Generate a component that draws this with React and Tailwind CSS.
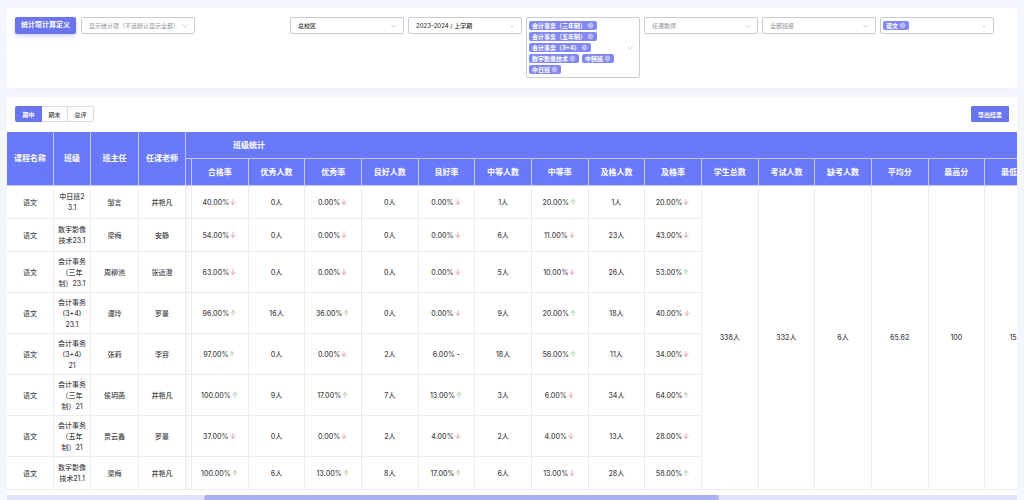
import React from 'react';
import { ArrowDown, ArrowUp, ChevronDown, CircleX } from 'lucide-react';

const classTags = ['会计事务（三年制）', '会计事务（五年制）', '会计事务（3+4）', '数字影像技术', '中韩班', '中日班'];

const statColumns = [
    '合格率', '优秀人数', '优秀率', '良好人数', '良好率', '中等人数', '中等率', '及格人数', '及格率',
    '学生总数', '考试人数', '缺考人数', '平均分', '最高分', '最低分',
];

const totals = ['338人', '332人', '6人', '65.62', '100', '15'];

// Trailing + means up, - means down, = means unchanged
const rows = [
    { name: '中日班2\n3.1', head: '邹言', teacher: '井艳凡', stats: ['40.00%-', '0人', '0.00%-', '0人', '0.00%-', '1人', '20.00%+', '1人', '20.00%-'] },
    { name: '数字影像\n技术23.1', head: '梁梅', teacher: '安静', stats: ['54.00%-', '0人', '0.00%-', '0人', '0.00%-', '6人', '11.00%-', '23人', '43.00%-'] },
    { name: '会计事务\n（三年\n制）23.1', head: '周柳池', teacher: '张适澄', stats: ['63.00%-', '0人', '0.00%-', '0人', '0.00%-', '5人', '10.00%-', '26人', '53.00%+'] },
    { name: '会计事务\n(3+4)\n23.1', head: '谭玲', teacher: '罗曼', stats: ['96.00%+', '16人', '36.00%+', '0人', '0.00%-', '9人', '20.00%+', '18人', '40.00%-'] },
    { name: '会计事务\n(3+4)\n21', head: '张莉', teacher: '李容', stats: ['97.00%+', '0人', '0.00%-', '2人', '6.00%=', '18人', '56.00%+', '11人', '34.00%-'] },
    { name: '会计事务\n（三年\n制）21', head: '侯玥菡', teacher: '井艳凡', stats: ['100.00%+', '9人', '17.00%+', '7人', '13.00%+', '3人', '6.00%-', '34人', '64.00%+'] },
    { name: '会计事务\n（五年\n制）21', head: '贾云鑫', teacher: '罗曼', stats: ['37.00%-', '0人', '0.00%-', '2人', '4.00%-', '2人', '4.00%-', '13人', '28.00%-'] },
    { name: '数字影像\n技术21.1', head: '梁梅', teacher: '井艳凡', stats: ['100.00%+', '6人', '13.00%+', '8人', '17.00%+', '6人', '13.00%-', '28人', '58.00%+'] },
];

function Select({ label, value, muted }) {
    return (
        <div className="relative w-[114px] shrink-0">
            <select
                aria-label={label}
                className={`block w-full h-[17px] pl-[7px] pr-3 border border-[#c9ccd6] rounded-xs bg-white appearance-none text-[6px] leading-[15px] ${muted ? 'text-[#909096]' : 'text-[#333] font-medium'}`}
            >
                <option>{value}</option>
            </select>
            <ChevronDown strokeWidth={1.5} className="absolute right-[5px] top-1 w-[10px] h-[10px] text-[#b4b7c0] pointer-events-none" />
        </div>
    );
}

function Tag({ children }) {
    return (
        <span className="flex items-center gap-px h-[9px] px-[3px] rounded-xs bg-[#8288ee] text-white font-bold text-[6px] leading-[9px] whitespace-nowrap">
            {children}
            <button aria-label={`移除 ${children}`}>
                <CircleX className="w-[7px] h-[7px] text-[#8288ee] fill-[#c8cbfa]" />
            </button>
        </span>
    );
}

function TagSelect({ label, tags }) {
    return (
        <div role="group" aria-label={label} className="flex items-center w-[114px] min-h-[17px] shrink-0 pl-[2px] pr-1 py-[3px] border border-[#c9ccd6] rounded-xs bg-white">
            <div className="flex flex-wrap flex-1 gap-x-[3px] gap-y-[2px]">
                {tags.map((tag) => <Tag key={tag}>{tag}</Tag>)}
            </div>
            <ChevronDown strokeWidth={1.5} className="w-[10px] h-[10px] -my-1 text-[#b4b7c0] shrink-0" />
        </div>
    );
}

function Stat({ value }) {
    const trend = value.slice(-1);
    if (!'+-='.includes(trend)) return value;
    return (
        <span className="inline-flex items-center">
            {value.slice(0, -1)}
            {trend === '+' && <ArrowUp strokeWidth={2} className="w-2 h-2 text-[#93b87c]" />}
            {trend === '-' && <ArrowDown strokeWidth={2} className="w-2 h-2 text-[#de7680]" />}
            {trend === '=' && <span className="pl-[2px] font-bold">-</span>}
        </span>
    );
}

export default function App() {
    const th = 'border-r border-b border-[#c3c8fb] font-bold';
    const td = 'border-r border-b border-[#ececf0]';

    return (
        <div className="min-h-[500px] overflow-hidden bg-[#f4f6fd] px-[7px] pt-2 text-[#48484c] font-['Inter','Noto_Sans_CJK_SC',sans-serif]">
            {/* Filters */}
            <section className="flex items-start h-20 px-2 pt-[9px] bg-white shadow-[0_2px_8px_#eeeffd]">
                <button className="w-[61px] h-[17px] mr-[5px] shrink-0 rounded-xs bg-[#6a74ec] text-white text-[7px] font-bold shadow-[0_2px_4px_#d0d3fa]">
                    统计项计算定义
                </button>
                <Select label="统计项" value="显示统计项（不选默认显示全部）" muted />
                <div className="flex items-start gap-1 ml-auto mr-[15px]">
                    <Select label="校区" value="总校区" />
                    <Select label="学期" value="2023-2024 / 上学期" />
                    <TagSelect label="专业" tags={classTags} />
                    <Select label="教师" value="任课教师" muted />
                    <Select label="班级" value="全部班级" muted />
                    <TagSelect label="课程" tags={['语文']} />
                </div>
            </section>

            <section className="mt-[9px] bg-white">
                <div className="flex items-start justify-between h-[35px] px-2 pt-[9px]">
                    <div className="flex text-[6px] text-[#444] font-medium">
                        <button className="w-[27px] h-[16px] rounded-l-xs bg-[#6a74ec] text-white font-bold">期中</button>
                        <button className="w-[26px] h-[16px] border-y border-r border-[#dcdde2]">期末</button>
                        <button className="w-[26px] h-[16px] border-y border-r border-[#dcdde2] rounded-r-xs">总评</button>
                    </div>
                    <button className="w-[38px] h-[16px] rounded-[1px] bg-[#6a74ec] text-white text-[6px] font-bold">导出结果</button>
                </div>

                {/* Statistics table */}
                <div className="overflow-hidden">
                    <table className="table-fixed border-separate border-spacing-0 w-[1035px] text-center text-[7px] leading-[11px] font-medium">
                        <colgroup>
                            <col className="w-[47px]" />
                            <col className="w-[37px]" />
                            <col className="w-[48px]" />
                            <col className="w-[47px]" />
                            <col className="w-[6px]" />
                            {statColumns.map((name) => <col key={name} />)}
                        </colgroup>
                        <thead className="bg-[#6979fa] text-white text-[8px]">
                            <tr className="h-[27px]">
                                <th rowSpan={2} className={th}>课程名称</th>
                                <th rowSpan={2} className={th}>班级</th>
                                <th rowSpan={2} className={th}>班主任</th>
                                <th rowSpan={2} className={th}>任课老师</th>
                                <th colSpan={16} className={`${th} pl-[47px] text-left`}>班级统计</th>
                            </tr>
                            <tr className="h-[27px]">
                                <th className={th} />
                                {statColumns.map((name) => <th key={name} className={th}>{name}</th>)}
                            </tr>
                        </thead>
                        <tbody>
                            {rows.map((row, i) => (
                                <tr key={row.name} className={row.name.split('\n').length > 2 ? 'h-[41px]' : 'h-[33px]'}>
                                    <td className={td}>语文</td>
                                    <td className={`${td} whitespace-pre`}>{row.name}</td>
                                    <td className={td}>{row.head}</td>
                                    <td className={td}>{row.teacher}</td>
                                    <td className={`${td} bg-linear-to-r from-[#f3f3f6] to-white`} />
                                    {row.stats.map((value, j) => (
                                        <td key={j} className={td}><Stat value={value} /></td>
                                    ))}
                                    {i === 0 && totals.map((value) => (
                                        <td key={value} rowSpan={rows.length} className={td}>{value}</td>
                                    ))}
                                </tr>
                            ))}
                        </tbody>
                    </table>
                </div>

                {/* Scroll track */}
                <div className="mt-[5px] h-[5px] bg-[#e0e2f9]">
                    <div className="w-[51%] h-full ml-[197px] rounded-full bg-[#aab3f0]" />
                </div>
            </section>
        </div>
    );
}
